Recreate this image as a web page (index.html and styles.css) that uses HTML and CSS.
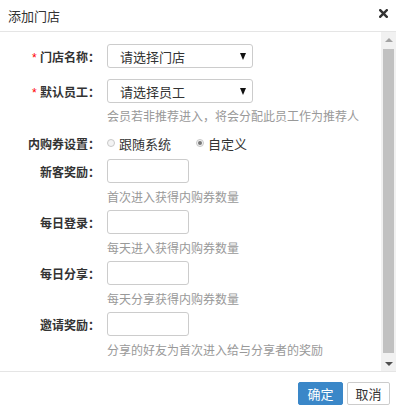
FILE: index.html
```html
<!DOCTYPE html>
<html lang="zh-CN">
<head>
 <meta charset="UTF-8">
 <title>添加门店</title>
 <link rel="stylesheet" href="styles.css">
</head>
<body>

 <div class="dialog">
  <div class="dlg-head">
   <span class="dlg-title">添加门店</span>
   <span class="dlg-close">
    <svg width="9" height="9" viewBox="0 0 9 9"><path d="M1.2 1.2 L7.8 7.8 M7.8 1.2 L1.2 7.8" stroke="#333" stroke-width="2.4" stroke-linecap="square"/></svg>
   </span>
  </div>

  <div class="dlg-body">
   <div class="form">

    <div class="row row-gap">
     <label class="lbl"><span class="req">*</span> 门店名称：</label>
     <div class="select"><span>请选择门店</span><span class="caret"></span></div>
    </div>

    <div class="row">
     <label class="lbl"><span class="req">*</span> 默认员工：</label>
     <div class="select"><span>请选择员工</span><span class="caret"></span></div>
    </div>
    <div class="hint hint-first">会员若非推荐进入，将会分配此员工作为推荐人</div>

    <div class="row row-radio">
     <label class="lbl">内购券设置：</label>
     <div class="radios">
      <span class="radio"><i class="dot"></i>跟随系统</span>
      <span class="radio"><i class="dot on"></i>自定义</span>
     </div>
    </div>

    <div class="row">
     <label class="lbl">新客奖励：</label>
     <input class="num" type="text">
    </div>
    <div class="hint">首次进入获得内购券数量</div>

    <div class="row">
     <label class="lbl">每日登录：</label>
     <input class="num" type="text">
    </div>
    <div class="hint">每天进入获得内购券数量</div>

    <div class="row">
     <label class="lbl">每日分享：</label>
     <input class="num" type="text">
    </div>
    <div class="hint">每天分享获得内购券数量</div>

    <div class="row">
     <label class="lbl">邀请奖励：</label>
     <input class="num" type="text">
    </div>
    <div class="hint">分享的好友为首次进入给与分享者的奖励</div>

   </div>

   <div class="scrollbar">
    <div class="sb-btn"><span class="sb-up"></span></div>
    <div class="sb-track"><div class="sb-thumb"></div></div>
    <div class="sb-btn"><span class="sb-down"></span></div>
   </div>
  </div>

  <div class="dlg-foot">
   <button class="btn btn-primary" type="button">确定</button>
   <button class="btn" type="button">取消</button>
  </div>
 </div>

</body>
</html>
```

FILE: styles.css
```css
 * {
   box-sizing: border-box;
  }

 body {
   margin: 0;
   background: #fff;
   font-family: "Liberation Sans", "Noto Sans CJK SC", sans-serif;
   color: #333;
  }

 .dialog {
   width: 396px;
   height: 414px;
   display: flex;
   flex-direction: column;
  }

 .dlg-head {
   height: 32px;
   padding: 0 8px;
   border-bottom: 1px solid #e5e5e5;
   display: flex;
   align-items: center;
   justify-content: space-between;
  }

 .dlg-title {
   font-size: 13px;
   color: #333;
  }

 .dlg-close {
   display: flex;
   margin-top: -5px;
  }

 .dlg-body {
   flex: 1;
   display: flex;
   min-height: 0;
  }

 .form {
   flex: 1;
   padding-top: 12px;
  }

 .row {
   display: flex;
   align-items: center;
   height: 24px;
  }

 .row-gap {
   margin-bottom: 11px;
  }

 .row-radio {
   margin-top: 5px;
   margin-bottom: 4px;
  }

 .lbl {
   width: 100px;
   margin-right: 7px;
   text-align: right;
   font-size: 12px;
   font-weight: bold;
   color: #333;
  }

 .req {
   color: #f00;
   font-weight: normal;
  }

 .select {
   width: 146px;
   height: 24px;
   border: 1px solid #ccc;
   border-radius: 3px;
   padding: 0 6px 0 12px;
   display: flex;
   align-items: center;
   justify-content: space-between;
   font-size: 13px;
   color: #333;
  }

 .caret {
   width: 0;
   height: 0;
   border-left: 3.5px solid transparent;
   border-right: 3.5px solid transparent;
   border-top: 7px solid #111;
  }

 .radios {
   display: flex;
   gap: 25px;
   font-size: 13px;
   color: #333;
  }

 .radio {
   display: flex;
   align-items: center;
  }

 .dot {
   width: 8px;
   height: 8px;
   border: 1px solid #c8c8c8;
   border-radius: 50%;
   background: #f4f4f4;
   margin-right: 4px;
   display: flex;
   align-items: center;
   justify-content: center;
  }

 .dot.on::after {
   content: "";
   width: 4px;
   height: 4px;
   border-radius: 50%;
   background: #777;
  }

 .num {
   width: 82px;
   height: 24px;
   border: 1px solid #ccc;
   border-radius: 3px;
   padding: 0 6px;
   margin: 0;
  }

 .hint {
   margin: 6px 0 3px 107px;
   line-height: 18px;
   font-size: 12px;
   color: #999;
  }

 .hint-first {
   margin-top: 5px;
   margin-bottom: 0;
  }

 .scrollbar {
   width: 15px;
   background: #f1f1f1;
   display: flex;
   flex-direction: column;
  }

 .sb-btn {
   height: 15px;
   display: flex;
   align-items: center;
   justify-content: center;
  }

 .sb-up {
   border-left: 4px solid transparent;
   border-right: 4px solid transparent;
   border-bottom: 4px solid #a3a3a3;
  }

 .sb-down {
   border-left: 4px solid transparent;
   border-right: 4px solid transparent;
   border-top: 4px solid #505050;
  }

 .sb-track {
   flex: 1;
   padding: 2px 2px 3px 2px;
   display: flex;
  }

 .sb-thumb {
   flex: 1;
   background: #c1c1c1;
  }

 .dlg-foot {
   height: 43px;
   border-top: 1px solid #e5e5e5;
   padding: 10px 6px 0 0;
   display: flex;
   justify-content: flex-end;
   align-items: flex-start;
   gap: 4px;
  }

 .btn {
   height: 23px;
   width: 43px;
   padding: 0;
   border: 1px solid #ccc;
   border-radius: 2px;
   background: #fff;
   color: #333;
   font-family: "Liberation Sans", "Noto Sans CJK SC", sans-serif;
   font-size: 13px;
   cursor: pointer;
  }

 .btn-primary {
   width: 45px;
   background: #3a87c8;
   border-color: #3a87c8;
   color: #fff;
  }
```
